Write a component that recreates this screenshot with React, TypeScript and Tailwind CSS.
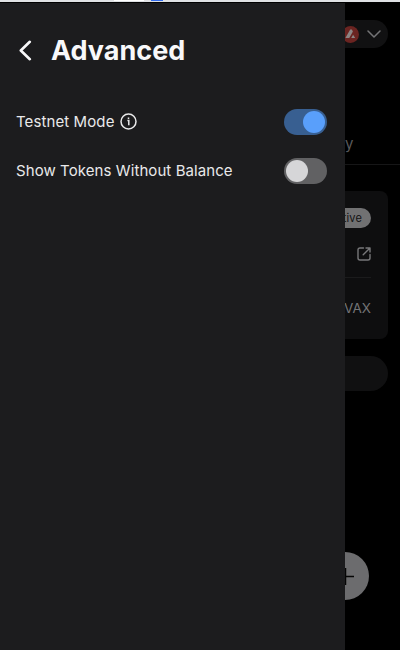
import React, { useState } from "react";

function Toggle({ label, initial }: { label: string; initial: boolean }) {
  const [on, setOn] = useState(initial);
  return (
    <button
      role="switch"
      aria-checked={on}
      aria-label={label}
      onClick={() => setOn(!on)}
      className={`flex h-[26px] w-[43px] items-center rounded-full px-0.5 ${
        on ? "justify-end bg-[#385f91]" : "justify-start bg-[#616163]"
      }`}
    >
      <span className={`size-[22px] rounded-full ${on ? "bg-[#599ffb]" : "bg-[#d6d6d8]"}`} />
    </button>
  );
}

function InfoIcon() {
  return (
    <svg className="size-[17px]" viewBox="0 0 17 17" fill="none" stroke="#e9e9ea" strokeWidth="1.5">
      <circle cx="8.5" cy="8.5" r="7.5" />
      <path d="M7.4 7.5h1.4v4.8M8.5 4.4v1.6" />
    </svg>
  );
}

function Drawer() {
  return (
    <section className="w-[345px] shrink-0 bg-[#1c1c1e] pr-[18px] pl-4 text-[#e9e9ea]">
      <header className="flex h-[94px] items-center pl-[3px]">
        <svg className="h-[21px] w-[13px]" viewBox="0 0 13 21" fill="none" stroke="#f8f8fa" strokeWidth="2.6" strokeLinecap="round" strokeLinejoin="round">
          <path d="M10.8 1.8 1.8 10.5 10.8 19.2" />
        </svg>
        <h1 className="ml-[19px] pt-0.5 text-[27px] leading-[34px] font-bold text-[#f8f8fa]">Advanced</h1>
      </header>
      <div className="flex h-[49px] items-center justify-between">
        <span className="flex items-center gap-[5px] text-[15px] leading-6 tracking-[0.1px]">
          <span className="pt-px">Testnet Mode</span> <InfoIcon />
        </span>
        <Toggle label="Testnet Mode" initial={true} />
      </div>
      <div className="flex h-[49px] items-center justify-between text-[15px] leading-6 tracking-[0.08px]">
        <span className="pt-px">Show Tokens Without Balance</span>
        <Toggle label="Show Tokens Without Balance" initial={false} />
      </div>
    </section>
  );
}

function WalletPage() {
  return (
    <aside className="flex w-[55px] shrink-0 flex-col items-end overflow-hidden bg-black text-[#747476]">
      <div className="mt-[17px] mr-3 flex h-7 w-[60px] shrink-0 items-center justify-between rounded-full bg-[#111112] pr-[7px] pl-[14px]">
        <svg className="size-[17px]" viewBox="0 0 17 17">
          <circle cx="8.5" cy="8.5" r="8.5" fill="#6b2421" />
          <path d="M8.2 3.6h1.6l1.1 2L7.3 12H3.4zM11.1 8.7 13.2 12H9.2z" fill="#8b8584" />
        </svg>
        <svg className="h-2 w-[14px]" viewBox="0 0 14 8" fill="none" stroke="#747476" strokeWidth="1.5" strokeLinecap="round" strokeLinejoin="round">
          <path d="M1 1l6 6 6-6" />
        </svg>
      </div>
      <div className="mt-[84px] flex h-[33px] w-[55px] shrink-0 justify-start border-b border-[#161617] text-[15px] leading-6 text-[#59595b]">
        <span>y</span>
      </div>
      <div className="mt-[26px] mr-3 flex h-[148px] w-[200px] shrink-0 flex-col items-end rounded-lg bg-[#0e0e0f] px-[17px]">
        <span className="mt-[17px] flex h-5 items-center rounded-full bg-[#717172] px-[9px] pt-px text-[11px] tracking-[0.15px] text-[#111112]">Active</span>
        <svg className="mt-[19px] size-[14px] shrink-0 overflow-visible" viewBox="0 0 14 14" fill="none" stroke="#777779" strokeWidth="1.4" strokeLinecap="round" strokeLinejoin="round">
          <path d="M6.5 1H3Q1 1 1 3v8q0 2 2 2h8q2 0 2-2V7.5M9 1h4v4M13 1 6.2 7.8" />
        </svg>
        <div className="mt-[16px] h-px w-full bg-[#1b1b1c]" />
        <span className="mt-[20px] text-[13.5px] leading-5">AVAX</span>
      </div>
      <div className="mt-[17px] mr-3 h-[35px] w-[200px] shrink-0 rounded-full bg-[#101011]" />
      <div className="mt-[161px] mr-[31px] flex size-12 shrink-0 items-center justify-center rounded-full bg-[#6c6c6e]">
        <svg className="size-[17px]" viewBox="0 0 17 17" stroke="#050505" strokeWidth="1.5">
          <path d="M8.5 0v17M0 8.5h17" />
        </svg>
      </div>
    </aside>
  );
}

export default function App() {
  return (
    <main className="flex h-[650px] w-[400px] flex-col overflow-hidden bg-black font-['Inter',sans-serif]">
      <div className="flex h-[3px] shrink-0 border-b border-black bg-[#dfe1e4]">
        <div className="ml-[114px] h-px w-[30px] bg-white" />
        <div className="ml-[7px] h-px w-3 bg-[#326bec]" />
      </div>
      <div className="flex min-h-0 flex-1">
        <Drawer />
        <WalletPage />
      </div>
    </main>
  );
}
